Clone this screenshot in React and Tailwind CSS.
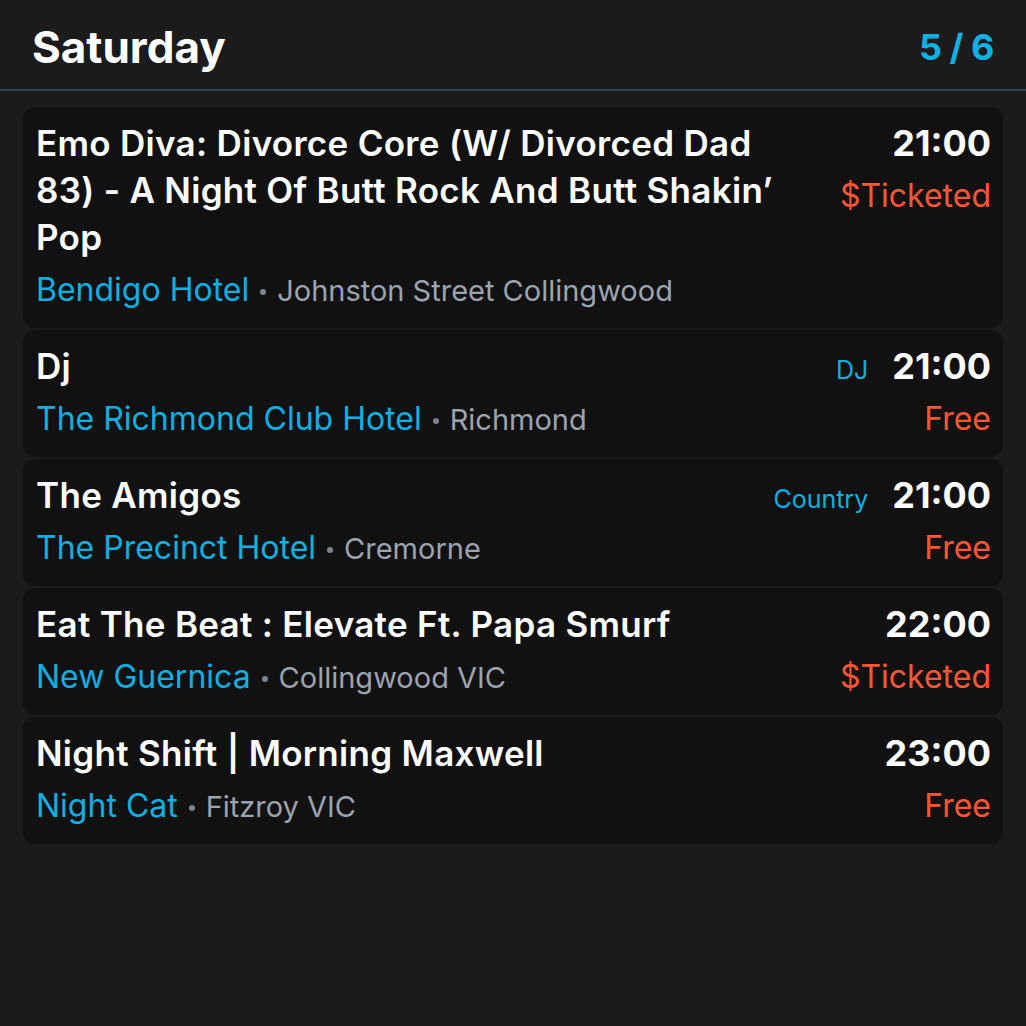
import React from 'react'

const events = [
  {
    id: 1,
    title: 'Emo Diva: Divorce Core (W/ Divorced Dad 83) - A Night Of Butt Rock And Butt Shakin’ Pop',
    venue: 'Bendigo Hotel',
    location: 'Johnston Street Collingwood',
    time: '21:00',
    price: '$Ticketed',
  },
  {
    id: 2,
    title: 'Dj',
    genre: 'DJ',
    venue: 'The Richmond Club Hotel',
    location: 'Richmond',
    time: '21:00',
    price: 'Free',
  },
  {
    id: 3,
    title: 'The Amigos',
    genre: 'Country',
    venue: 'The Precinct Hotel',
    location: 'Cremorne',
    time: '21:00',
    price: 'Free',
  },
  {
    id: 4,
    title: 'Eat The Beat : Elevate Ft. Papa Smurf',
    venue: 'New Guernica',
    location: 'Collingwood VIC',
    time: '22:00',
    price: '$Ticketed',
  },
  {
    id: 5,
    title: 'Night Shift | Morning Maxwell',
    venue: 'Night Cat',
    location: 'Fitzroy VIC',
    time: '23:00',
    price: 'Free',
  },
]

function EventCard({ event }) {
  return (
    <div className="flex gap-10 rounded-xl bg-[#111111] pl-[13px] pr-3 pt-[13px] pb-4">
      {/* Left: title + venue */}
      <div className="flex-1 min-w-0">
        <h3 className="text-[35px] font-semibold leading-[47px] tracking-[0.3px] text-white">
          {event.title}
        </h3>
        <p className="mt-[7px] text-[32px] leading-[44px]">
          <span className="leading-none text-[#0cb0e3]">{event.venue}</span>
          <span className="mx-[11px] inline-block size-[6px] rounded-full bg-[#7d8491] align-middle" />
          <span className="text-[29px] leading-none text-[#9ca3af]">{event.location}</span>
        </p>
      </div>

      {/* Right: genre, time, price */}
      <div className="flex shrink-0 flex-col items-end">
        <div className="flex items-baseline gap-6 leading-[47px]">
          {event.genre && <span className="text-[25px] leading-none text-[#0cb0e3]">{event.genre}</span>}
          <span className="text-[36px] font-bold leading-[47px] text-white">{event.time}</span>
        </div>
        <span className="mt-[7px] text-[32px] leading-[44px] text-[#ff5733]">{event.price}</span>
      </div>
    </div>
  )
}

export default function App() {
  return (
    <div className="min-h-[1026px] bg-[#1b1b1b] font-['Inter',sans-serif]">
      {/* Header */}
      <div className="flex h-[91px] items-center justify-between border-b-2 border-[#38414e] px-8 pt-1">
        <h1 className="text-[44px] font-bold text-white">Saturday</h1>
        <span className="text-[36px] font-bold tracking-[-0.5px] text-[#0cb0e3]">5 / 6</span>
      </div>

      {/* Event list */}
      <div className="flex flex-col gap-[2px] px-[23px] pt-4">
        {events.map((event) => (
          <EventCard key={event.id} event={event} />
        ))}
      </div>
    </div>
  )
}
